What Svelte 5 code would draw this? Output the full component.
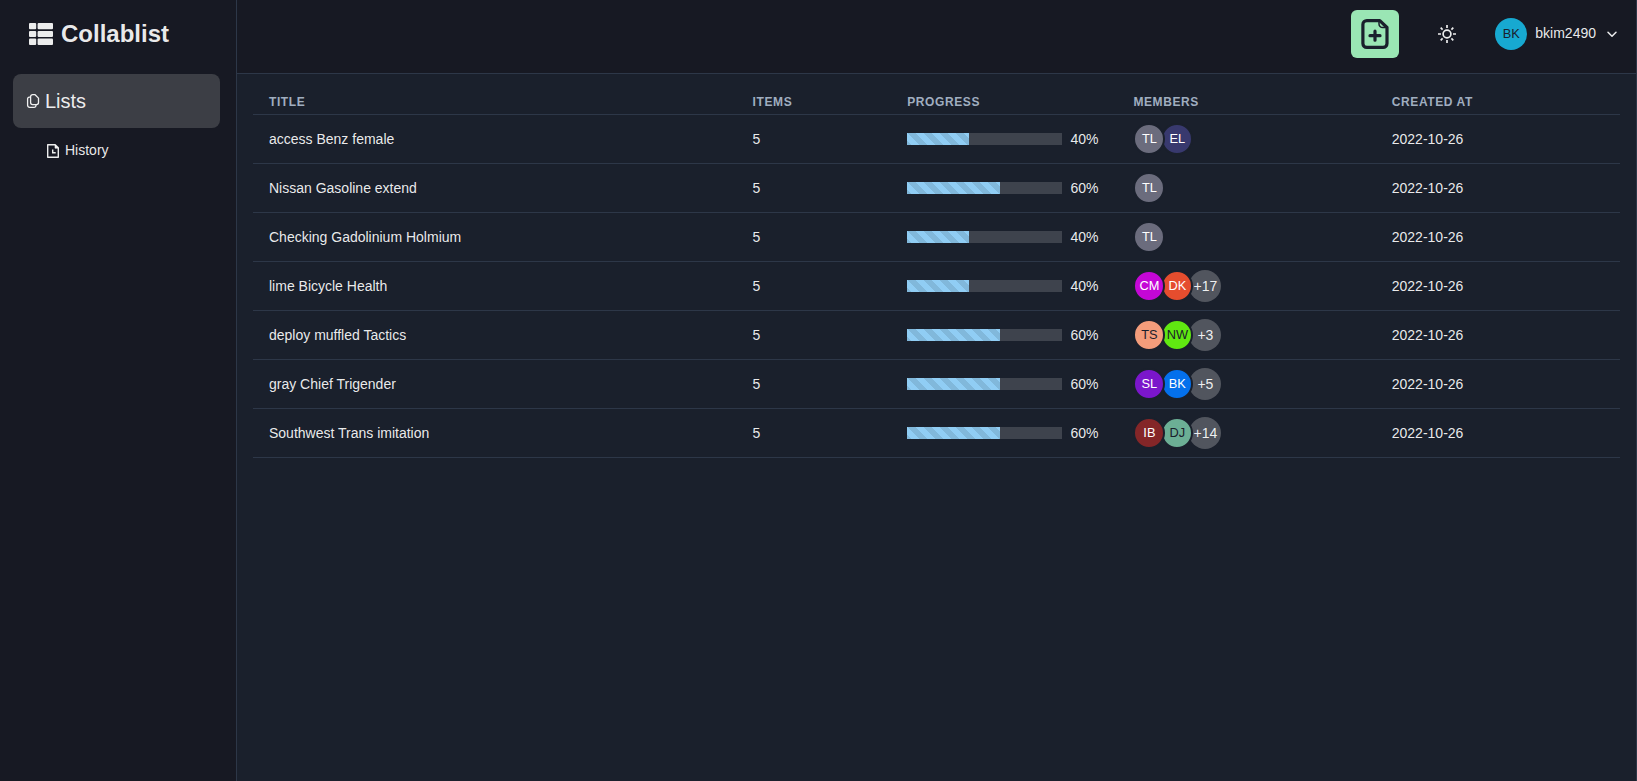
<script>
  const rows = [
    { title: 'access Benz female', pct: 40, members: [['TL', '#6b6c7d', '#fff'], ['EL', '#38396e', '#fff']] },
    { title: 'Nissan Gasoline extend', pct: 60, members: [['TL', '#6b6c7d', '#fff']] },
    { title: 'Checking Gadolinium Holmium', pct: 40, members: [['TL', '#6b6c7d', '#fff']] },
    { title: 'lime Bicycle Health', pct: 40, members: [['CM', '#c407d6', '#fff'], ['DK', '#e54d2e', '#fff']], more: 17 },
    { title: 'deploy muffled Tactics', pct: 60, members: [['TS', '#f39c7b', '#1a202c'], ['NW', '#60e811', '#1a202c']], more: 3 },
    { title: 'gray Chief Trigender', pct: 60, members: [['SL', '#7b16cb', '#fff'], ['BK', '#0470ec', '#fff']], more: 5 },
    { title: 'Southwest Trans imitation', pct: 60, members: [['IB', '#842628', '#fff'], ['DJ', '#6caf95', '#1a202c']], more: 14 }
  ];
</script>

<div class="app">
  <aside>
    <div class="brand">
      <svg width="24" height="24" viewBox="0 0 24 24" fill="currentColor">
        <rect x="0" y="1" width="7.200" height="6.300" rx="1" /><rect x="8.600" y="1" width="15.400" height="6.300" rx="1" />
        <rect x="0" y="8.900" width="7.200" height="6.100" rx="1" /><rect x="8.600" y="8.900" width="15.400" height="6.100" rx="1" />
        <rect x="0" y="16.600" width="7.200" height="6.300" rx="1" /><rect x="8.600" y="16.600" width="15.400" height="6.300" rx="1" />
      </svg>
      <span>Collablist</span>
    </div>
    <nav>
      <a class="lists" href="#lists">
        <svg width="14" height="14" viewBox="0 0 14 14" fill="none" stroke="currentColor" stroke-width="1.300" stroke-linejoin="round">
          <path d="M6.600.700h2.500l3.400 3.400v4.500a2 2 0 0 1-2 2H6.600a2 2 0 0 1-2-2v-5.900a2 2 0 0 1 2-2z" />
          <path d="M4.300 3.200H3.200A1.600 1.600 0 0 0 1.600 4.800v6.500a2 2 0 0 0 2 2h4.700a1.700 1.700 0 0 0 1.700-1.700v-.900" />
        </svg>
        <span>Lists</span>
      </a>
      <a class="history" href="#history">
        <svg width="14" height="14" viewBox="0 0 14 14" fill="none" stroke="currentColor" stroke-width="1.400" stroke-linejoin="round">
          <path d="M1.700.800h7.500l3.100 3v9.400H1.700z" />
          <path d="M9 1v3.200h3.200z" fill="currentColor" stroke-width=".6" />
          <path d="M6.700 5.500v3.300h3" stroke-linejoin="miter" />
        </svg>
        <span>History</span>
      </a>
    </nav>
  </aside>

  <div class="main">
    <header>
      <button class="add" aria-label="New list">
        <svg width="32" height="32" viewBox="0 0 32 32" fill="none" stroke="currentColor" stroke-width="3.200" stroke-linecap="round" stroke-linejoin="round">
          <path d="M7.800 2.600H20.800L28 9.500v16a3.900 3.900 0 0 1-3.900 3.900H7.800a3.900 3.900 0 0 1-3.900-3.900V6.500a3.900 3.900 0 0 1 3.900-3.900z" />
          <path d="M20 3v3a3.600 3.600 0 0 0 3.600 3.600H27" stroke-width="1.500" />
          <path d="M16 13.200v9M11 17.700h10" stroke-width="3.200" />
        </svg>
      </button>
      <button class="theme" aria-label="Theme">
        <svg width="18" height="18" viewBox="0 0 18 18" fill="none" stroke="currentColor" stroke-width="1.700">
          <circle cx="9" cy="9" r="3.900" />
          <path d="M9 0v3M9 15v3M0 9h3M15 9h3M2.700 2.700l1.900 1.900M13.400 13.400l1.900 1.900M2.700 15.300l1.900-1.900M13.400 4.600l1.900-1.900" />
        </svg>
      </button>
      <button class="user">
        <span class="bk">BK</span>
        <span class="name">bkim2490</span>
        <svg width="14" height="14" viewBox="0 0 14 14" fill="none" stroke="currentColor" stroke-width="1.500" stroke-linecap="round" stroke-linejoin="round"><path d="M3 5.200l4 4 4-4" /></svg>
      </button>
    </header>

    <section>
      <div class="row head">
        <div>Title</div><div>Items</div><div>Progress</div><div>Members</div><div>Created at</div>
      </div>
      {#each rows as r}
        <div class="row">
          <div>{r.title}</div>
          <div>5</div>
          <div class="progress">
            <div class="track"><div class="fill" style="width: {r.pct}%"></div></div>
            <span>{r.pct}%</span>
          </div>
          <div class="members">
            {#each r.members as m, i}
              <span class="avatar" style="background: {m[1]}; color: {m[2]}; z-index: {3 - i}">{m[0]}</span>
            {/each}
            {#if r.more}<span class="more">+{r.more}</span>{/if}
          </div>
          <div>2022-10-26</div>
        </div>
      {/each}
    </section>
  </div>
</div>

<style>
  :global(body) { background: #1a202c; }
  .app {
    display: flex;
    height: 781px;
    box-sizing: border-box;
    font: 14px/20px "Liberation Sans", Arial, sans-serif;
    color: rgba(255, 255, 255, 0.92);
    background: #1a202c;
    overflow: hidden;
  }
  aside {
    width: 237px;
    flex: none;
    box-sizing: border-box;
    background: #171923;
    border-right: 1px solid #2d3748;
  }
  .brand {
    display: flex;
    align-items: center;
    gap: 8px;
    height: 68px;
    padding-left: 29px;
    font-size: 24px;
    font-weight: 700;
  }
  nav { display: flex; flex-direction: column; padding: 6px 16px 0 13px; }
  a { display: flex; align-items: center; color: inherit; text-decoration: none; }
  .lists { height: 54px; padding-left: 13px; gap: 5px; font-size: 20px; border-radius: 8px; background: #3c3e45; }
  .history { height: 44px; padding-left: 33px; gap: 5px; }
  .history svg { margin-top: 1px; }
  .main { flex: 1; box-sizing: border-box; border-right: 1px solid #2d3748; }
  header {
    display: flex;
    align-items: center;
    justify-content: flex-end;
    height: 74px;
    box-sizing: border-box;
    padding: 0 17px 5px 0;
    background: #171923;
    border-bottom: 1px solid #2d3748;
  }
  button { border: 0; padding: 0; background: none; font: inherit; color: inherit; display: flex; align-items: center; justify-content: center; }
  .add { width: 48px; height: 48px; border-radius: 6px; background: #9ae6b4; color: #1a202c; }
  .theme { width: 48px; height: 48px; margin-right: 24px; margin-left: 24px; }
  .bk { width: 32px; height: 32px; border-radius: 50%; background: #17a9d1; color: #1a202c; font-size: 12.8px; line-height: 32px; margin-right: 8px; }
  .name { margin-right: 9px; margin-bottom: 2px; }
  section { padding: 16px 16px 0; }
  .row {
    display: grid;
    grid-template-columns: 483.600px 154.600px 226.200px 258.400px 1fr;
    align-items: center;
    height: 49px;
    box-sizing: border-box;
    border-bottom: 1px solid #2d3748;
  }
  .row > div { padding: 0 16px; }
  .head {
    height: 25px;
    font-size: 12px;
    line-height: 16px;
    font-weight: 700;
    letter-spacing: 0.6px;
    text-transform: uppercase;
    color: #a0aec0;
  }
  .progress { display: flex; align-items: center; gap: 8.300px; }
  .track { width: 155px; height: 12px; background: rgba(255, 255, 255, 0.16); }
  .fill {
    height: 100%;
    background-color: #90cdf4;
    background-image: linear-gradient(45deg, rgba(0, 0, 0, 0.1) 25%, transparent 25%, transparent 50%, rgba(0, 0, 0, 0.1) 50%, rgba(0, 0, 0, 0.1) 75%, transparent 75%, transparent);
    background-size: 16px 16px;
  }
  .members { display: flex; align-items: center; }
  .avatar, .more {
    position: relative;
    width: 32px;
    height: 32px;
    box-sizing: border-box;
    border-radius: 50%;
    display: flex;
    align-items: center;
    justify-content: center;
  }
  .avatar { border: 2px solid #1a202c; margin-right: -4px; font-size: 12.8px; }
  .more { background: #51555e; }
</style>
